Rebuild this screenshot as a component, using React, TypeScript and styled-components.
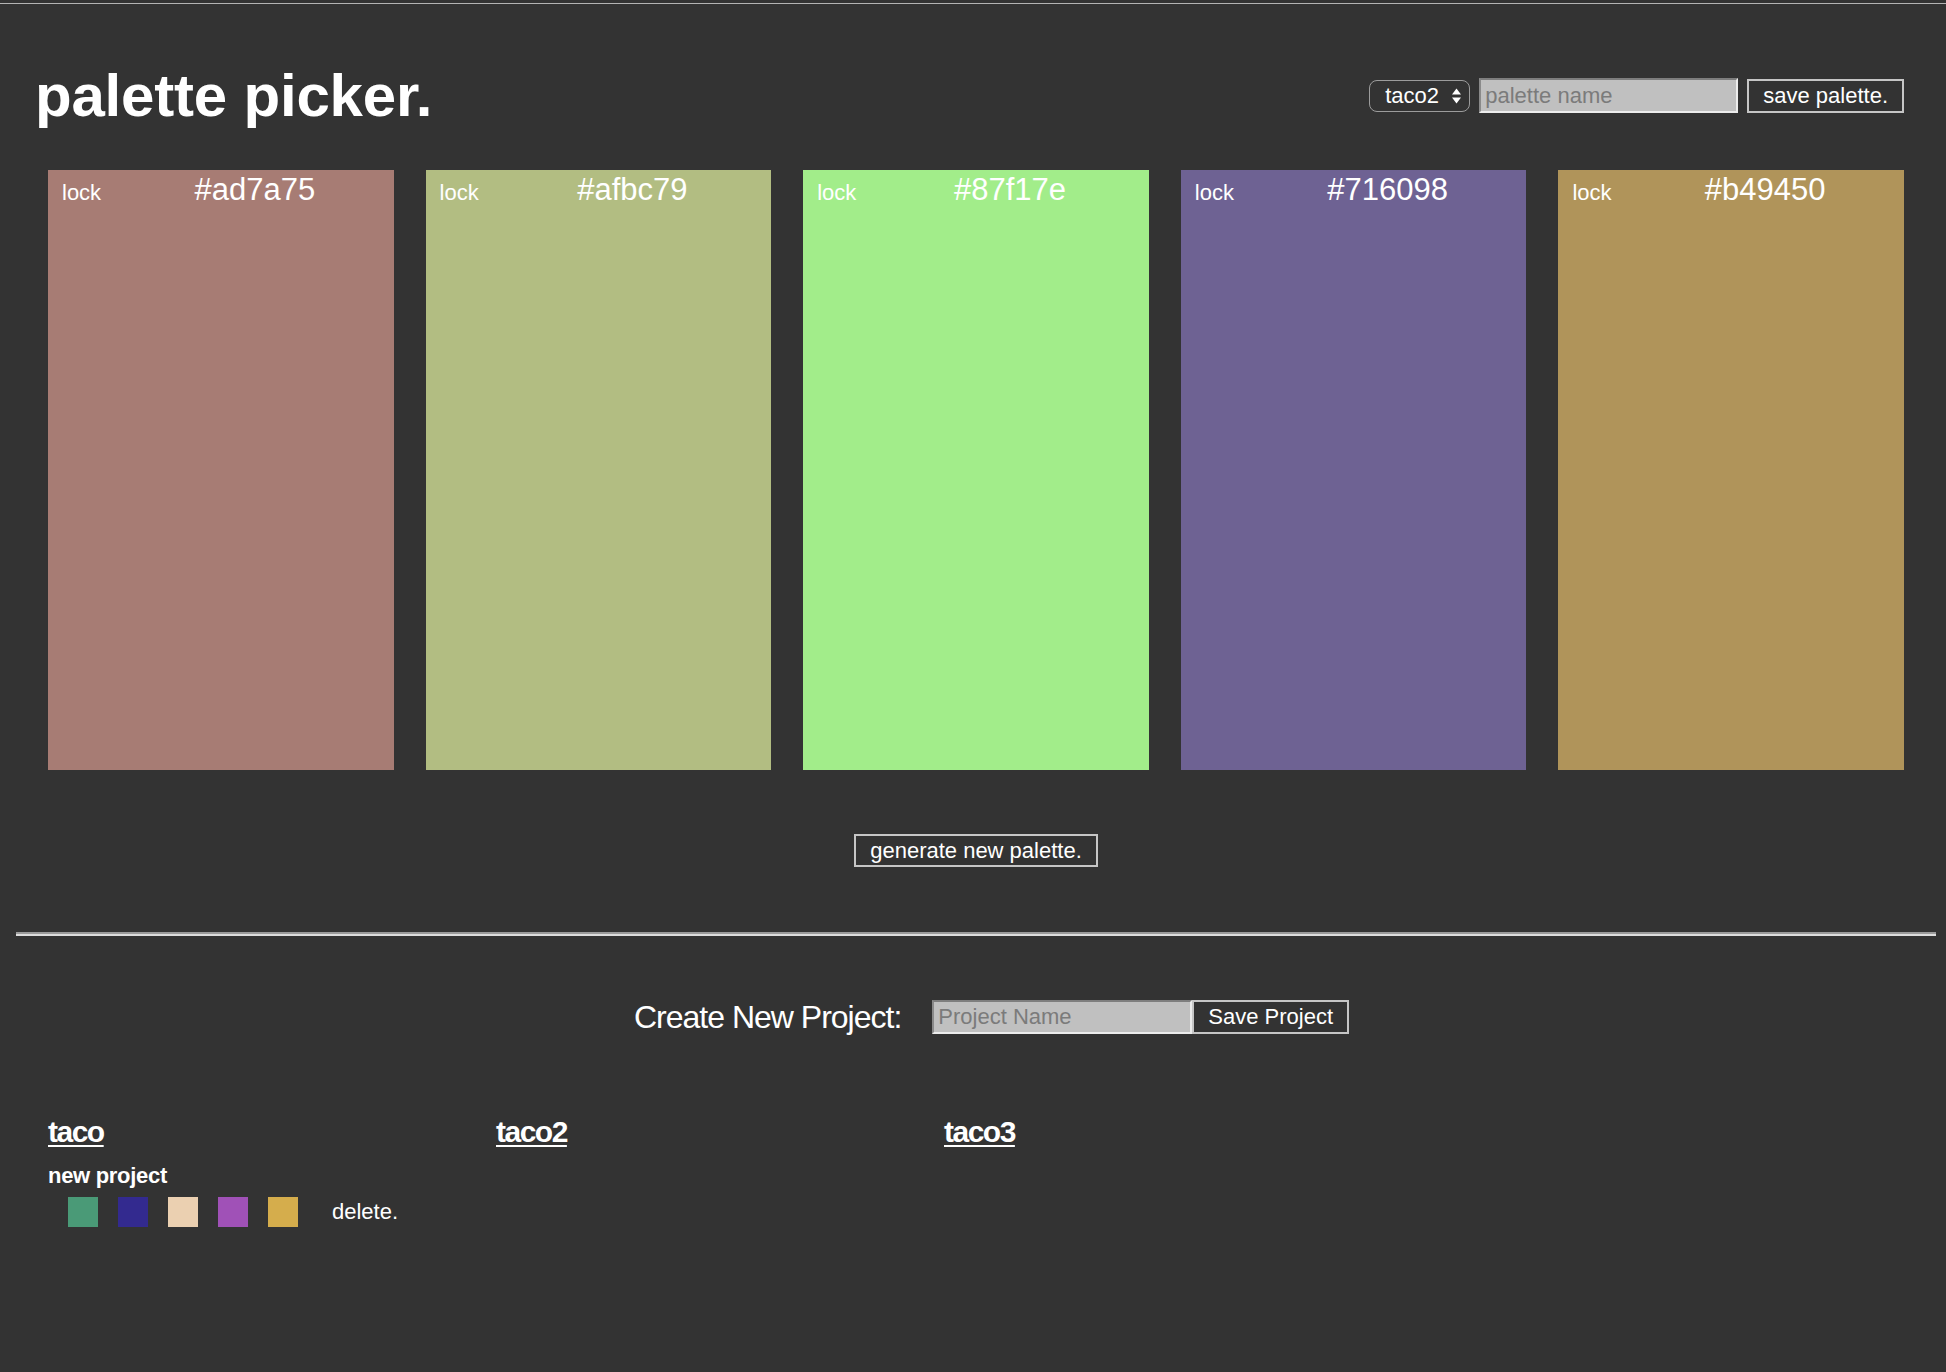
import React from "react";
import styled, { createGlobalStyle } from "styled-components";

const Global = createGlobalStyle`
  html, body {
    margin: 0;
    padding: 0;
    background: #333333;
  }
  body {
    font-family: "Liberation Sans", Arial, Helvetica, sans-serif;
    color: #ffffff;
  }
  * { box-sizing: border-box; }
`;

const Page = styled.div`
  display: flex;
  flex-direction: column;
  min-height: 1372px;
  padding-top: 3px;
`;

const TopRule = styled.div`
  height: 1px;
  background: #b4b4b4;
`;

const Header = styled.header`
  display: flex;
  justify-content: space-between;
  align-items: flex-start;
  padding: 62px 42px 0 35px;
`;

const Title = styled.h1`
  margin: 0;
  font-size: 60px;
  line-height: 60px;
  font-weight: 700;
  letter-spacing: -0.2px;
`;

const Controls = styled.div`
  display: flex;
  align-items: center;
  gap: 9px;
  margin-top: 12px;
`;

const SelectWrap = styled.div`
  position: relative;
  display: inline-flex;
`;

const Select = styled.select`
  appearance: none;
  -webkit-appearance: none;
  width: 101px;
  height: 32px;
  padding: 0 30px 0 15px;
  border: 1.5px solid #9c9c9c;
  border-radius: 8px;
  background: transparent;
  color: #ffffff;
  font-family: inherit;
  font-size: 22px;
  outline: none;
`;

const Arrows = styled.svg`
  position: absolute;
  right: 8px;
  top: 7px;
  pointer-events: none;
`;

const TextInput = styled.input<{ $w: number; $h: number }>`
  width: ${(p) => p.$w}px;
  height: ${(p) => p.$h}px;
  padding: 0 4px;
  background: #c0c0c0;
  border-style: solid;
  border-width: 2px;
  border-color: #7e7e7e #ececec #ececec #8a8a8a;
  color: #222;
  font-family: inherit;
  font-size: 22px;
  outline: none;
  &::placeholder {
    color: #7b7b7b;
  }
`;

const OutlineButton = styled.button<{ $h: number }>`
  height: ${(p) => p.$h}px;
  padding: 0 14px;
  border: 2px solid #c6c6c6;
  background: #333333;
  color: #ffffff;
  font-family: inherit;
  font-size: 22px;
  line-height: 1;
  cursor: pointer;
`;

const Swatches = styled.section`
  display: flex;
  gap: 32px;
  margin-top: 44px;
  padding: 0 42px 0 48px;
`;

const Swatch = styled.div<{ $bg: string }>`
  flex: 1 1 0;
  height: 600px;
  background: ${(p) => p.$bg};
  padding-top: 4px;
`;

const SwatchHead = styled.div`
  display: flex;
  align-items: baseline;
`;

const Lock = styled.span`
  width: 68px;
  padding-left: 14px;
  font-size: 22px;
  flex-shrink: 0;
`;

const Hex = styled.span`
  flex: 1;
  text-align: center;
  font-size: 31px;
  line-height: 31px;
`;

const GenerateRow = styled.div`
  display: flex;
  justify-content: center;
  margin-top: 64px;
  padding: 0 42px 0 48px;
`;

const Divider = styled.hr`
  margin: 65px 10px 0 16px;
  height: 4px;
  border: none;
  border-top: 2px solid #9b9b9b;
  border-bottom: 2px solid #dddddd;
`;

const CreateRow = styled.div`
  display: flex;
  justify-content: center;
  align-items: center;
  margin-top: 64px;
  padding-left: 37px;
`;

const CreateLabel = styled.span`
  font-size: 32px;
  line-height: 34px;
  letter-spacing: -1px;
  margin-right: 31px;
`;

const Projects = styled.section`
  display: grid;
  grid-template-columns: repeat(3, 448px);
  margin-top: 81px;
  padding-left: 48px;
`;

const Project = styled.div`
  display: flex;
  flex-direction: column;
  align-items: flex-start;
`;

const ProjectTitle = styled.a`
  color: #ffffff;
  font-size: 30px;
  line-height: 34.5px;
  font-weight: 700;
  letter-spacing: -1.5px;
  text-decoration: underline;
  text-decoration-thickness: 2px;
  text-underline-offset: 3px;
`;

const PaletteName = styled.div`
  margin-top: 13px;
  font-size: 22px;
  line-height: 26px;
  font-weight: 700;
  letter-spacing: -0.3px;
`;

const PaletteRow = styled.div`
  display: flex;
  align-items: center;
  gap: 20px;
  margin-top: 8px;
  padding-left: 20px;
`;

const Chip = styled.span<{ $bg: string }>`
  width: 30px;
  height: 30px;
  background: ${(p) => p.$bg};
`;

const Delete = styled.span`
  margin-left: 14px;
  font-size: 22px;
`;

const swatches = [
  { hex: "#ad7a75", shown: "#a77c74" },
  { hex: "#afbc79", shown: "#b2bd82" },
  { hex: "#87f17e", shown: "#a2ed8a" },
  { hex: "#716098", shown: "#6e6293" },
  { hex: "#b49450", shown: "#b0945a" },
];

const chips = ["#4a9a77", "#332a8f", "#ebd0b1", "#a051b7", "#d5ad4c"];

export default function App() {
  return (
    <Page>
      <Global />
      <TopRule />
      <Header>
        <Title>palette picker.</Title>
        <Controls>
          <SelectWrap>
            <Select defaultValue="taco2">
              <option value="taco">taco</option>
              <option value="taco2">taco2</option>
              <option value="taco3">taco3</option>
            </Select>
            <Arrows width="11" height="18" viewBox="0 0 11 18">
              <polygon points="1,7.5 5.5,1.5 10,7.5" fill="#ffffff" />
              <polygon points="1,10.5 5.5,16.5 10,10.5" fill="#ffffff" />
            </Arrows>
          </SelectWrap>
          <TextInput $w={259} $h={35} placeholder="palette name" />
          <OutlineButton $h={34}>save palette.</OutlineButton>
        </Controls>
      </Header>

      <Swatches>
        {swatches.map((s) => (
          <Swatch key={s.hex} $bg={s.shown}>
            <SwatchHead>
              <Lock>lock</Lock>
              <Hex>{s.hex}</Hex>
            </SwatchHead>
          </Swatch>
        ))}
      </Swatches>

      <GenerateRow>
        <OutlineButton $h={33}>generate new palette.</OutlineButton>
      </GenerateRow>

      <Divider />

      <CreateRow>
        <CreateLabel>Create New Project:</CreateLabel>
        <TextInput $w={260} $h={34} placeholder="Project Name" />
        <OutlineButton $h={34}>Save Project</OutlineButton>
      </CreateRow>

      <Projects>
        <Project>
          <ProjectTitle href="#">taco</ProjectTitle>
          <PaletteName>new project</PaletteName>
          <PaletteRow>
            {chips.map((c) => (
              <Chip key={c} $bg={c} />
            ))}
            <Delete>delete.</Delete>
          </PaletteRow>
        </Project>
        <Project>
          <ProjectTitle href="#">taco2</ProjectTitle>
        </Project>
        <Project>
          <ProjectTitle href="#">taco3</ProjectTitle>
        </Project>
      </Projects>
    </Page>
  );
}
